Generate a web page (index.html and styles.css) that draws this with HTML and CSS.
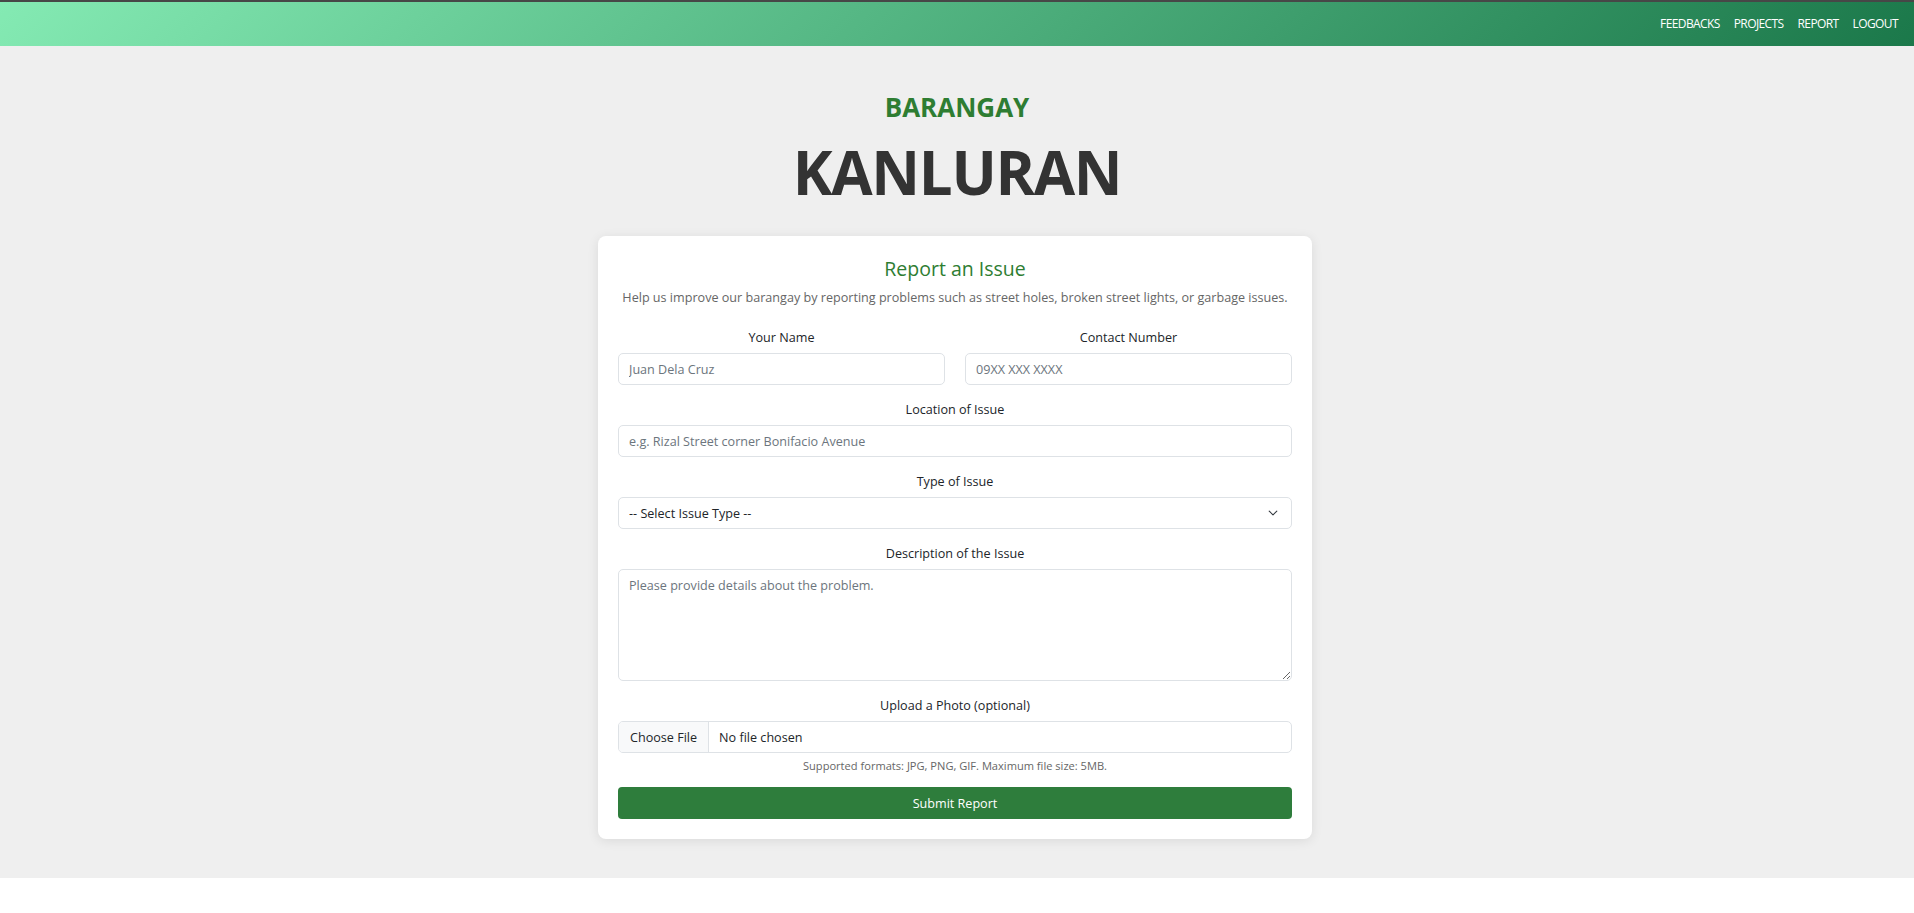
FILE: index.html
```html
<!DOCTYPE html>
<html lang="en">
<head>
<meta charset="utf-8">
<title>Barangay Kanluran - Report an Issue</title>
<link rel="stylesheet" href="styles.css">
</head>
<body>
<header class="topbar">
  <nav class="nav">
    <a class="nav-link" href="#">FEEDBACKS</a>
    <a class="nav-link" href="#">PROJECTS</a>
    <a class="nav-link" href="#">REPORT</a>
    <a class="nav-link" href="#">LOGOUT</a>
  </nav>
</header>
<main class="page">
  <div class="brand">
    <div class="brand-sub">BARANGAY</div>
    <h1 class="brand-title">KANLURAN</h1>
  </div>
  <section class="card">
    <h2 class="card-title">Report an Issue</h2>
    <p class="card-lead">Help us improve our barangay by reporting problems such as street holes, broken street lights, or garbage issues.</p>
    <form class="form">
      <div class="row">
        <div class="field">
          <label class="label">Your Name</label>
          <input class="control" type="text" placeholder="Juan Dela Cruz">
        </div>
        <div class="field">
          <label class="label">Contact Number</label>
          <input class="control" type="text" placeholder="09XX XXX XXXX">
        </div>
      </div>
      <div class="field">
        <label class="label">Location of Issue</label>
        <input class="control" type="text" placeholder="e.g. Rizal Street corner Bonifacio Avenue">
      </div>
      <div class="field">
        <label class="label">Type of Issue</label>
        <div class="select-wrap">
          <select class="control select">
            <option>-- Select Issue Type --</option>
            <option>Street Hole</option>
            <option>Broken Street Light</option>
            <option>Garbage</option>
            <option>Other</option>
          </select>
          <svg class="chevron" width="10" height="6" viewBox="0 0 10 6"><path d="M1.2 1.2l3.8 3.6 3.8-3.6" fill="none" stroke="#343a40" stroke-width="1.1" stroke-linecap="round" stroke-linejoin="round"/></svg>
        </div>
      </div>
      <div class="field">
        <label class="label">Description of the Issue</label>
        <textarea class="control textarea" placeholder="Please provide details about the problem."></textarea>
      </div>
      <div class="field field-file">
        <label class="label">Upload a Photo (optional)</label>
        <div class="control file">
          <span class="file-btn">Choose File</span>
          <span class="file-name">No file chosen</span>
        </div>
        <div class="help">Supported formats: JPG, PNG, GIF. Maximum file size: 5MB.</div>
      </div>
      <button class="submit" type="button">Submit Report</button>
    </form>
  </section>
</main>
</body>
</html>
```
FILE: styles.css
```css
* { box-sizing: border-box; }
html, body { margin: 0; padding: 0; background: #ffffff; }
body {
  font-family: "Open Sans", "Noto Sans", sans-serif;
  color: #212529;
}
.topbar {
  height: 46px;
  border-top: 2px solid #474747;
  background: linear-gradient(135deg, #84eab3 0%, #1b784a 100%);
  display: flex;
  justify-content: flex-end;
  align-items: center;
  padding-right: 16px;
}
.nav { display: flex; gap: 14px; }
.nav-link {
  color: #ffffff;
  text-decoration: none;
  font-size: 12px;
  letter-spacing: -0.6px;
  line-height: 16px;
}
.page {
  background: #efefef;
  padding: 45px 0 39px;
}
.brand { text-align: center; }
.brand-sub {
  font-size: 26px;
  line-height: 32px;
  font-weight: 700;
  color: #2e7d32;
}
.brand-title {
  margin: 12px 0 0;
  font-size: 60px;
  line-height: 74px;
  font-weight: 700;
  color: #333333;
  letter-spacing: -1.3px;
}
.card {
  width: 714px;
  margin: 27px 0 0 calc(50% - 359px);
  background: #ffffff;
  border-radius: 8px;
  box-shadow: 0 2px 12px rgba(0, 0, 0, 0.09);
  padding: 21px 20px 20px;
}
.card-title {
  margin: 0;
  text-align: center;
  font-size: 19.5px;
  line-height: 24px;
  font-weight: 400;
  color: #2e7d32;
}
.card-lead {
  margin: 7px 0 20px;
  text-align: center;
  font-size: 12.6px;
  line-height: 20px;
  color: #666666;
}
.form { display: flex; flex-direction: column; }
.row { display: grid; grid-template-columns: 1fr 1fr; gap: 20px; }
.field { display: flex; flex-direction: column; margin-bottom: 15px; }
.label {
  text-align: center;
  font-size: 12.6px;
  line-height: 20px;
  margin-bottom: 5px;
  color: #212529;
}
.control {
  width: 100%;
  height: 32px;
  border: 1px solid #dee2e6;
  border-radius: 5px;
  background: #ffffff;
  font-family: inherit;
  font-size: 12.6px;
  color: #212529;
  padding: 0 10px;
  outline: none;
}
.control::placeholder { color: #6c757d; opacity: 1; }
.select-wrap { position: relative; }
.select {
  appearance: none;
  -webkit-appearance: none;
  padding-right: 30px;
}
.chevron {
  position: absolute;
  right: 14px;
  top: 13px;
  pointer-events: none;
}
.textarea {
  height: 112px;
  padding: 7px 10px;
  line-height: 18px;
  resize: vertical;
}
.field-file { margin-bottom: 0; }
.file {
  display: flex;
  align-items: center;
  padding: 0;
  overflow: hidden;
}
.file-btn {
  height: 100%;
  display: flex;
  align-items: center;
  padding: 0 11px;
  background: #f8f9fa;
  border-right: 1px solid #dee2e6;
  color: #212529;
}
.file-name { padding-left: 10px; color: #212529; }
.help {
  margin-top: 4px;
  text-align: center;
  font-size: 11.1px;
  line-height: 17px;
  color: #666666;
}
.submit {
  margin-top: 13px;
  height: 32px;
  border: none;
  border-radius: 4px;
  background: #2e7d3c;
  color: #ffffff;
  font-family: inherit;
  font-size: 12.6px;
  cursor: pointer;
}
```
